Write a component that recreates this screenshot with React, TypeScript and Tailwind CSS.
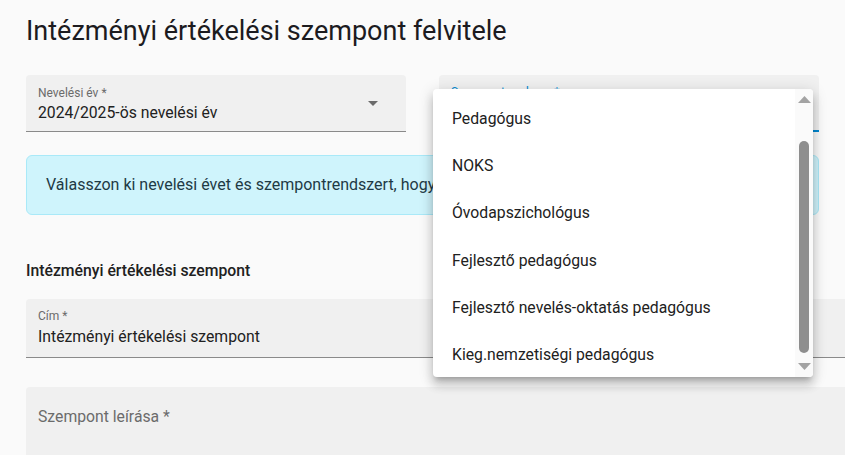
import React from 'react';

const menuItems = [
  'Pedagógus',
  'NOKS',
  'Óvodapszichológus',
  'Fejlesztő pedagógus',
  'Fejlesztő nevelés-oktatás pedagógus',
  'Kieg.nemzetiségi pedagógus',
];

function SelectArrow() {
  return (
    <svg width="10" height="5" viewBox="0 0 10 5" className="fill-[#6b6b6b]">
      <path d="M0 0 L10 0 L5 5 Z" />
    </svg>
  );
}

export default function App() {
  return (
    <div className="relative w-[845px] h-[455px] overflow-hidden bg-[#fafafa] font-['Roboto',sans-serif] text-[#212121]">
      <div className="pl-[26px] pt-[14px]">
        <h1 className="text-[27px] leading-[34px] font-normal text-[#1c1b1f]">
          Intézményi értékelési szempont felvitele
        </h1>

        {/* Selects */}
        <div className="flex gap-[33px] mt-[27px]">
          <div className="w-[380px] h-[57px] bg-[#f0f0f0] rounded-t-[4px] border-b border-[#8a8a8a] flex items-center pl-[12px] pr-[28px]">
            <div className="flex-1 pt-[4px]">
              <div className="text-[12px] leading-[14px] text-[#6b6b6b]">Nevelési év *</div>
              <div className="text-[15.75px] leading-[22px] text-[#212121] mt-[2px]">2024/2025-ös nevelési év</div>
            </div>
            <SelectArrow />
          </div>
          <div className="w-[380px] h-[57px] bg-[#f0f0f0] rounded-t-[4px] border-b-2 border-[#0288d1] pl-[12px] pt-[10px]">
            <div className="text-[12px] leading-[14px] text-[#0288d1]">Szempontrendszer *</div>
          </div>
        </div>

        {/* Info */}
        <div className="mt-[23px] w-[793px] h-[60px] bg-[#cff4fc] border border-[#a9e9f8] rounded-[6px] flex items-center pl-[19px]">
          <span className="text-[16px] text-[#1e3a45]">
            Válasszon ki nevelési évet és szempontrendszert, hogy a szempontok megjelenjenek.
          </span>
        </div>

        <h2 className="mt-[46px] text-[15.75px] leading-[20px] font-medium text-[#212121]">
          Intézményi értékelési szempont
        </h2>

        <div className="mt-[18px] w-[830px] h-[59px] bg-[#f0f0f0] rounded-t-[4px] border-b border-[#8a8a8a] pl-[12px] pt-[10px]">
          <div className="text-[12px] leading-[14px] text-[#6b6b6b]">Cím *</div>
          <div className="text-[15.75px] leading-[22px] text-[#212121] mt-[3px]">Intézményi értékelési szempont</div>
        </div>

        <div className="mt-[29px] w-[830px] h-[120px] bg-[#f0f0f0] rounded-t-[4px] pl-[12px] pt-[19px]">
          <div className="text-[15.75px] leading-[22px] text-[#6b6b6b]">Szempont leírása *</div>
        </div>
      </div>

      {/* Dropdown overlay */}
      <div className="absolute left-[433px] top-[89px] w-[380px] h-[288px] bg-white rounded-[4px] shadow-[0_5px_5px_-3px_rgba(0,0,0,0.2),0_8px_10px_1px_rgba(0,0,0,0.14),0_3px_14px_2px_rgba(0,0,0,0.12)] flex overflow-hidden">
        <ul className="flex-1 pt-[6px]">
          {menuItems.map((item) => (
            <li key={item} className="h-[47.3px] flex items-center pl-[19px] text-[15.75px] text-[#212121]">
              {item}
            </li>
          ))}
        </ul>
        <div className="w-[18px] bg-[#fafafa] flex flex-col items-center py-[7px]">
          <svg width="13" height="7" viewBox="0 0 13 7" className="fill-[#a3a3a3]">
            <path d="M0 7 L6.5 0 L13 7 Z" />
          </svg>
          <div className="flex-1 w-full flex justify-center pt-[38px] pb-[10px]">
            <div className="w-[10px] h-full bg-[#8e8e8e] rounded-full" />
          </div>
          <svg width="13" height="7" viewBox="0 0 13 7" className="fill-[#a3a3a3]">
            <path d="M0 0 L13 0 L6.5 7 Z" />
          </svg>
        </div>
      </div>
    </div>
  );
}
